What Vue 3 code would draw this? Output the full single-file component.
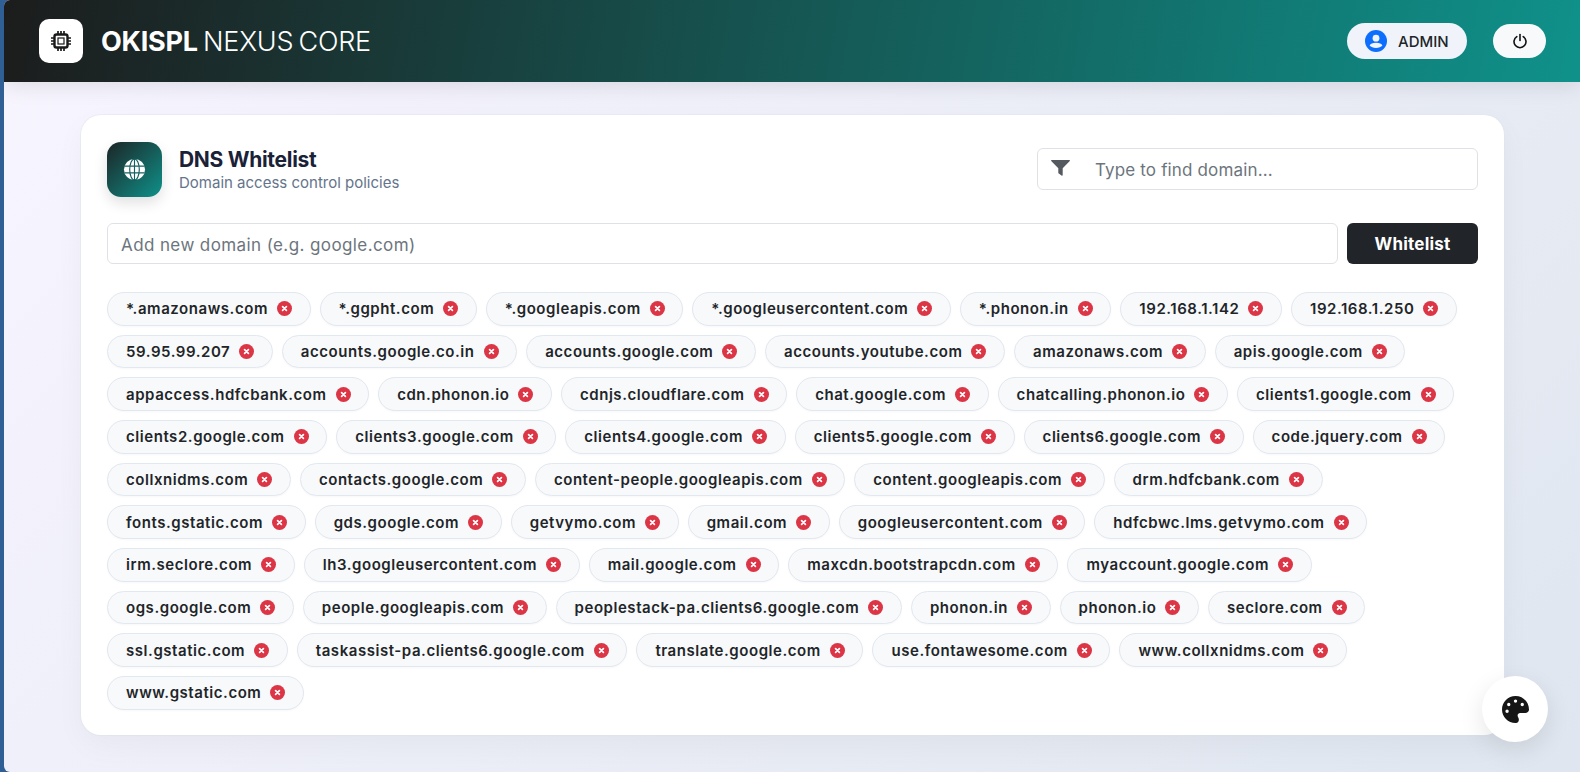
<script setup>
import { ref, computed } from 'vue'

const search = ref('')
const newDomain = ref('')

const domains = ref([
  '*.amazonaws.com', '*.ggpht.com', '*.googleapis.com', '*.googleusercontent.com', '*.phonon.in',
  '192.168.1.142', '192.168.1.250', '59.95.99.207', 'accounts.google.co.in', 'accounts.google.com',
  'accounts.youtube.com', 'amazonaws.com', 'apis.google.com', 'appaccess.hdfcbank.com', 'cdn.phonon.io',
  'cdnjs.cloudflare.com', 'chat.google.com', 'chatcalling.phonon.io', 'clients1.google.com',
  'clients2.google.com', 'clients3.google.com', 'clients4.google.com', 'clients5.google.com',
  'clients6.google.com', 'code.jquery.com', 'collxnidms.com', 'contacts.google.com',
  'content-people.googleapis.com', 'content.googleapis.com', 'drm.hdfcbank.com', 'fonts.gstatic.com',
  'gds.google.com', 'getvymo.com', 'gmail.com', 'googleusercontent.com', 'hdfcbwc.lms.getvymo.com',
  'irm.seclore.com', 'lh3.googleusercontent.com', 'mail.google.com', 'maxcdn.bootstrapcdn.com',
  'myaccount.google.com', 'ogs.google.com', 'people.googleapis.com', 'peoplestack-pa.clients6.google.com',
  'phonon.in', 'phonon.io', 'seclore.com', 'ssl.gstatic.com', 'taskassist-pa.clients6.google.com',
  'translate.google.com', 'use.fontawesome.com', 'www.collxnidms.com', 'www.gstatic.com'
])

const filtered = computed(() => domains.value.filter(d => d.includes(search.value.toLowerCase())))

function addDomain() {
  const d = newDomain.value.trim()
  if (!d) return
  domains.value.push(d)
  newDomain.value = ''
}

function removeDomain(d) {
  domains.value = domains.value.filter(x => x !== d)
}
</script>

<template>
  <div class="page">
    <header class="navbar">
      <div class="brand">
        <span class="brand-logo">
          <svg width="24" height="24" viewBox="0 0 24 24" fill="none" stroke="#1a1a1a">
            <rect x="5.5" y="5.5" width="13" height="13" rx="2" stroke-width="2.4" />
            <rect x="9" y="9" width="6" height="6" stroke-width="1.2" />
            <path d="M9 2v3M12 2v3M15 2v3M9 19v3M12 19v3M15 19v3M2 9h3M2 12h3M2 15h3M19 9h3M19 12h3M19 15h3" stroke-width="1.7" />
          </svg>
        </span>
        <span class="brand-name"><b>OKISPL</b> NEXUS CORE</span>
      </div>
      <div class="nav-actions">
        <div class="user-pill">
          <svg width="22" height="22" viewBox="0 0 22 22">
            <circle cx="11" cy="11" r="11" fill="#0d6efd" />
            <circle cx="11" cy="8.2" r="3.4" fill="#f0f4fa" />
            <path d="M4.6 15.6c.9-1.9 3-2.8 6.4-2.8s5.5.9 6.4 2.8c-1.4 1.5-3.7 2.4-6.4 2.4s-5-.9-6.4-2.4z" fill="#f0f4fa" />
          </svg>
          <span>ADMIN</span>
        </div>
        <button class="power-btn" aria-label="Log out">
          <svg width="16" height="16" viewBox="0 0 16 16" fill="none" stroke="#111" stroke-width="1.6" stroke-linecap="round">
            <path d="M8 1.5v6" />
            <path d="M4.8 3.6a6 6 0 1 0 6.4 0" />
          </svg>
        </button>
      </div>
    </header>

    <main class="content">
      <section class="card">
        <div class="card-head">
          <div class="title-group">
            <span class="title-icon">
              <svg width="23" height="23" viewBox="0 0 24 24" fill="none" stroke="#fff">
                <circle cx="12" cy="12" r="11" fill="#fff" stroke="none" />
                <g stroke="#14605f" stroke-width="1.2">
                  <ellipse cx="12" cy="12" rx="5" ry="11" />
                  <path d="M12 1v22M1.5 8.5h21M1.5 15.5h21" />
                </g>
              </svg>
            </span>
            <div>
              <h1>DNS Whitelist</h1>
              <p>Domain access control policies</p>
            </div>
          </div>
          <label class="search-box">
            <svg width="19" height="16" viewBox="0 0 19 16">
              <path d="M.6 0h17.8c.5 0 .7.6.4 1L11.7 8.2V15c0 .7-.7 1-1.2.6L7.8 13.6c-.3-.2-.5-.5-.5-.9V8.2L.2 1C-.1.6.1 0 .6 0z" fill="#555a60" />
            </svg>
            <input v-model="search" type="text" placeholder="Type to find domain..." />
          </label>
        </div>

        <form class="add-row" @submit.prevent="addDomain">
          <input v-model="newDomain" type="text" placeholder="Add new domain (e.g. google.com)" />
          <button type="submit">Whitelist</button>
        </form>

        <div class="chips">
          <span v-for="d in filtered" :key="d" class="chip">
            {{ d }}
            <button class="chip-x" :aria-label="'Remove ' + d" @click="removeDomain(d)">
              <svg width="15" height="15" viewBox="0 0 15 15">
                <circle cx="7.5" cy="7.5" r="7.5" fill="#dc3545" />
                <path d="M5.6 5.6l3.8 3.8M9.4 5.6l-3.8 3.8" stroke="#fff" stroke-width="1.7" stroke-linecap="round" />
              </svg>
            </button>
          </span>
        </div>
      </section>
    </main>

    <button class="theme-fab" aria-label="Theme">
      <svg width="27" height="27" viewBox="0 0 512 512">
        <path fill="#161616" d="M512 256c0 .9 0 1.8 0 2.7-.4 36.5-33.6 61.3-70.1 61.3H344c-26.5 0-48 21.5-48 48 0 3.4.4 6.7 1 9.9 2.1 10.2 6.5 20 10.8 29.9 6.1 13.8 12.1 27.5 12.1 42 0 31.8-21.6 60.7-53.4 62-3.5.1-7 .2-10.6.2C114.6 512 0 397.4 0 256S114.6 0 256 0s256 114.6 256 256zM128 288a32 32 0 1 0-64 0 32 32 0 1 0 64 0zm0-96a32 32 0 1 0 0-64 32 32 0 1 0 0 64zM288 96a32 32 0 1 0-64 0 32 32 0 1 0 64 0zm96 96a32 32 0 1 0 0-64 32 32 0 1 0 0 64z" />
      </svg>
    </button>
  </div>
</template>

<style>
html, body {
  margin: 0;
  height: 100%;
  background: #2f5f95;
}
</style>

<style scoped>
.page {
  position: relative;
  margin-left: 4px;
  height: 772px;
  overflow: hidden;
  border-radius: 6px 0 0 6px;
  background: linear-gradient(135deg, #f8f5ff 0%, #dfe6ef 100%);
  font-family: Inter, "Noto Sans", sans-serif;
  color: #1a1d21;
}

.navbar {
  height: 82px;
  box-sizing: border-box;
  padding: 0 34px 0 35px;
  display: flex;
  align-items: center;
  justify-content: space-between;
  background: linear-gradient(100deg, #1c1c1c 0%, #0f918a 100%);
  box-shadow: 0 4px 20px rgba(0, 0, 0, 0.1);
}

.brand {
  display: flex;
  align-items: center;
  gap: 18px;
}

.brand-logo {
  width: 44px;
  height: 44px;
  border-radius: 10px;
  background: #fff;
  display: flex;
  align-items: center;
  justify-content: center;
}

.brand-name {
  color: #fff;
  font-size: 27px;
  font-weight: 300;
  letter-spacing: -0.25px;
  word-spacing: -2px;
}

.brand-name b {
  font-weight: 700;
}

.nav-actions {
  display: flex;
  align-items: center;
  gap: 26px;
}

.user-pill {
  width: 120px;
  height: 36px;
  box-sizing: border-box;
  padding: 0 18px;
  display: flex;
  align-items: center;
  gap: 11px;
  border-radius: 18px;
  background: #f0f4fa;
  font-size: 15px;
  font-weight: 500;
  color: #212529;
}

.power-btn {
  width: 53px;
  height: 34px;
  border: none;
  border-radius: 17px;
  background: #f8f9fb;
  display: flex;
  align-items: center;
  justify-content: center;
  padding: 0;
}

.content {
  padding: 33px 76px 0 77px;
}

.card {
  height: 620px;
  box-sizing: border-box;
  padding: 27px 26px;
  background: #fff;
  border-radius: 20px;
  box-shadow: 0 10px 30px rgba(0, 0, 0, 0.04), 0 0 0 1px rgba(226, 232, 240, 0.5);
}

.card-head {
  display: flex;
  align-items: center;
  justify-content: space-between;
}

.title-group {
  display: flex;
  align-items: center;
  gap: 17px;
}

.title-icon {
  width: 55px;
  height: 55px;
  border-radius: 14px;
  background: linear-gradient(135deg, #1c2526 0%, #0f918a 100%);
  box-shadow: 0 6px 14px rgba(0, 0, 0, 0.12);
  display: flex;
  align-items: center;
  justify-content: center;
}

h1 {
  margin: 0;
  font-size: 21px;
  line-height: 26px;
  font-weight: 700;
  letter-spacing: -0.3px;
  color: #1a2238;
}

p {
  margin: 0;
  font-size: 15px;
  line-height: 20px;
  color: #64748b;
}

.search-box {
  width: 441px;
  height: 42px;
  margin-bottom: 2px;
  box-sizing: border-box;
  padding: 0 16px 0 13px;
  display: flex;
  align-items: center;
  gap: 25px;
  border: 1px solid #dee2e6;
  border-radius: 6px;
}

.search-box svg {
  margin-bottom: 2px;
}

.search-box input {
  padding: 2px 0 0;
}

input {
  flex: 1;
  min-width: 0;
  border: none;
  outline: none;
  background: transparent;
  font: inherit;
  font-size: 17px;
  letter-spacing: 0.15px;
  color: #212529;
}

input::placeholder {
  color: #6c757d;
}

.add-row {
  margin-top: 26px;
  display: flex;
  gap: 9px;
}

.add-row input {
  height: 41px;
  box-sizing: border-box;
  padding: 2px 13px 0;
  border: 1px solid #dee2e6;
  border-radius: 6px;
  letter-spacing: 0.4px;
}

.add-row button {
  width: 131px;
  border: none;
  border-radius: 6px;
  background: #212529;
  color: #fff;
  font: inherit;
  font-size: 17px;
  font-weight: 700;
  letter-spacing: 0.2px;
}

.chips {
  margin-top: 28px;
  display: flex;
  flex-wrap: wrap;
  gap: 9px;
}

.chip {
  height: 33.67px;
  box-sizing: border-box;
  padding: 0 17.6px 0 18px;
  display: inline-flex;
  align-items: center;
  gap: 9px;
  border: 1px solid #e2e8f0;
  border-radius: 17px;
  background: #f8f9fa;
  font-size: 15px;
  font-weight: 600;
  letter-spacing: 0.55px;
  color: #212529;
  box-shadow: 0 1px 2px rgba(0, 0, 0, 0.03);
}

.chip-x {
  width: 15px;
  height: 15px;
  padding: 0;
  border: none;
  background: none;
  display: flex;
}

.theme-fab {
  position: absolute;
  right: 32px;
  bottom: 30px;
  width: 66px;
  height: 66px;
  border: none;
  border-radius: 50%;
  background: #fff;
  box-shadow: 0 8px 24px rgba(0, 0, 0, 0.1);
  display: flex;
  align-items: center;
  justify-content: center;
  padding: 0;
}
</style>
